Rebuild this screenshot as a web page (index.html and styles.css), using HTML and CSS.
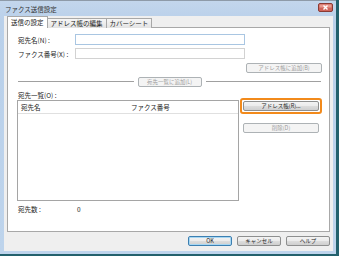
FILE: index.html
```html
<!DOCTYPE html>
<html lang="ja">
<head>
  <meta charset="UTF-8">
  <title>ファクス送信設定</title>
  <link rel="stylesheet" href="styles.css">
</head>
<body>
  <div class="window">
    <div class="titlebar">
      <span class="title">ファクス送信設定</span>
      <span class="close">
        <svg width="15" height="9" viewBox="0 0 15 9">
          <rect x="0.5" y="0.5" width="14" height="8" rx="1.5" fill="#d0645a" stroke="#8a3a34"/>
          <rect x="1.5" y="1.5" width="12" height="3" fill="#e89a90"/>
          <path d="M5.5 2.5 L9.5 6.5 M9.5 2.5 L5.5 6.5" stroke="#fff" stroke-width="1.4"/>
        </svg>
      </span>
    </div>

    <div class="client">
      <!-- タブ -->
      <div class="tabs">
        <span class="tab active">送信の設定</span>
        <span class="tab">アドレス帳の編集</span>
        <span class="tab">カバーシート</span>
      </div>

      <div class="panel">
        <div class="field">
          <label>宛先名(N) :</label>
          <span class="input focused"></span>
        </div>
        <div class="field">
          <label>ファクス番号(X) :</label>
          <span class="input"></span>
        </div>
        <div class="row-right">
          <span class="btn disabled wide">アドレス帳に追加(B)</span>
        </div>

        <div class="separator">
          <span class="line"></span>
          <span class="btn disabled mid">宛先一覧に追加(L)</span>
          <span class="line"></span>
        </div>

        <div class="list-label">宛先一覧(O) :</div>
        <div class="list-area">
          <div class="listbox">
            <div class="list-head">
              <span class="col-name">宛先名</span>
              <span class="col-fax">ファクス番号</span>
            </div>
          </div>
          <div class="side-buttons">
            <span class="focus-ring"><span class="btn wide">アドレス帳(R)...</span></span>
            <span class="btn disabled wide">削除(D)</span>
          </div>
        </div>

        <div class="count">
          <span class="count-label">宛先数 :</span>
          <span>0</span>
        </div>
      </div>

      <div class="footer">
        <span class="btn default">OK</span>
        <span class="btn">キャンセル</span>
        <span class="btn">ヘルプ</span>
      </div>
    </div>
  </div>
</body>
</html>
```

FILE: styles.css
```css
html, body {
  margin: 0;
  padding: 0;
}

body {
  width: 339px;
  height: 256px;
  background-color: #23616d;
  font-family: "Noto Sans CJK JP", "Noto Sans", sans-serif;
  font-size: 6.5px;
  color: #222;
  overflow: hidden;
}

.window {
  width: 336px;
  height: 254px;
  box-sizing: border-box;
  padding: 0 3px 3px 4px;
  background: linear-gradient(#c3d6ec, #b9d0ea 20px, #bed4ec);
  border-top: 1px solid #8e9aa8;
  display: flex;
  flex-direction: column;
}

.titlebar {
  height: 15px;
  display: flex;
  align-items: center;
  justify-content: space-between;
}

.title {
  margin-left: 1px;
  color: #333;
  font-size: 6.5px;
}

.close {
  display: flex;
  margin-right: 0;
  margin-top: -2px;
}

.client {
  flex: 1;
  background-color: #efefef;
  display: flex;
  flex-direction: column;
  padding: 1px 3px 0 3px;
}

.tabs {
  display: flex;
  height: 11px;
  align-items: flex-end;
  position: relative;
  z-index: 1;
}

.tab {
  height: 9px;
  line-height: 9px;
  padding: 0 3px;
  border: 1px solid #a8a8a8;
  border-bottom: none;
  background: linear-gradient(#f6f6f6, #e3e3e3);
  margin-right: -1px;
}

.tab.active {
  height: 11px;
  line-height: 11px;
  background: #fff;
  margin-left: 0;
}

.panel {
  height: 205px;
  box-sizing: border-box;
  background: #fff;
  border: 1px solid #a8a8a8;
  margin-top: -1px;
  padding: 6px 7px 0 9px;
  display: flex;
  flex-direction: column;
}

.field {
  display: flex;
  align-items: center;
  height: 11px;
  margin-bottom: 3px;
}

.field label {
  width: 57px;
  margin-left: 1px;
}

.input {
  width: 170px;
  height: 11px;
  box-sizing: border-box;
  border: 1px solid #d2d2d2;
  background: #fff;
}

.input.focused {
  border-color: #a9c6e2;
}

.btn {
  display: inline-flex;
  align-items: center;
  justify-content: center;
  box-sizing: border-box;
  height: 10px;
  border: 1px solid #8e8f8f;
  border-radius: 2px;
  background: linear-gradient(#f3f3f3, #ebebeb 50%, #dddddd 51%, #cfcfcf);
  color: #222;
  font-size: 5.5px;
  white-space: nowrap;
}

.btn.disabled {
  border-color: #adb2b5;
  background: #f4f4f4;
  color: #9c9c9c;
}

.btn.wide {
  width: 76px;
}

.btn.mid {
  width: 64px;
}

.row-right {
  display: flex;
  justify-content: flex-end;
  margin-top: 1px;
}

.separator {
  display: flex;
  align-items: center;
  margin-top: 4px;
  margin-left: 1px;
  margin-right: 1px;
  gap: 4px;
}

.line {
  flex: 1;
  height: 0;
  border-top: 1px solid #a0a0a0;
  border-bottom: 1px solid #fff;
}

.list-label {
  margin-top: 4px;
  margin-left: 1px;
  height: 9px;
  line-height: 9px;
}

.list-area {
  display: flex;
  gap: 4px;
  margin-top: 0;
}

.listbox {
  width: 227px;
  height: 101px;
  box-sizing: border-box;
  border: 1px solid #a5a5a5;
  background: #fff;
}

.list-head {
  display: flex;
  align-items: center;
  height: 12px;
  border-bottom: 1px solid #e0e0e0;
}

.col-name {
  width: 110px;
  padding-left: 3px;
}

.side-buttons {
  display: flex;
  flex-direction: column;
  align-items: center;
  margin-top: -2px;
  margin-left: -3px;
}

.focus-ring {
  display: flex;
  padding: 1px;
  border: 2px solid #f28a1b;
  border-radius: 3px;
  margin-bottom: 9px;
}

.count {
  display: flex;
  margin-top: 3px;
  margin-left: 1px;
}

.count-label {
  width: 59px;
}

.footer {
  display: flex;
  justify-content: flex-end;
  gap: 5px;
  margin-top: 4px;
  padding-right: 0;
}

.footer .btn {
  width: 44px;
}

.btn.default {
  border-color: #3c7fb1;
  box-shadow: inset 0 0 0 1px #a7d7f3;
}
```
